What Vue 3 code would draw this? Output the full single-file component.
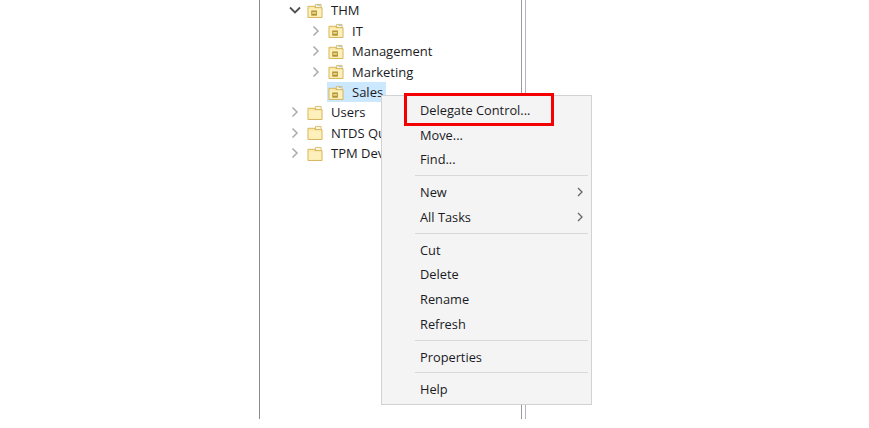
<script setup>
const tree = [
  { label: 'THM', level: 0, arrow: 'open', ou: true },
  { label: 'IT', level: 1, arrow: 'closed', ou: true },
  { label: 'Management', level: 1, arrow: 'closed', ou: true },
  { label: 'Marketing', level: 1, arrow: 'closed', ou: true },
  { label: 'Sales', level: 1, arrow: 'none', ou: true, selected: true },
  { label: 'Users', level: 0, arrow: 'closed', ou: false },
  { label: 'NTDS Quotas', level: 0, arrow: 'closed', ou: false },
  { label: 'TPM Devices', level: 0, arrow: 'closed', ou: false },
]
const groups = [
  [{ label: 'Delegate Control...' }, { label: 'Move...' }, { label: 'Find...' }],
  [{ label: 'New', sub: true }, { label: 'All Tasks', sub: true }],
  [{ label: 'Cut' }, { label: 'Delete' }, { label: 'Rename' }, { label: 'Refresh' }],
  [{ label: 'Properties' }],
  [{ label: 'Help' }],
]
</script>

<template>
  <div class="page">
    <div class="pane">
      <ul class="tree">
        <li v-for="n in tree" :key="n.label" class="row" :class="'lvl' + n.level">
          <span class="arrow">
            <svg v-if="n.arrow === 'open'" width="12" height="12" viewBox="0 0 12 12">
              <path d="M1 3.5 L6 8.5 L11 3.5" fill="none" stroke="#505050" stroke-width="1.8" />
            </svg>
            <svg v-else-if="n.arrow === 'closed'" width="12" height="12" viewBox="0 0 12 12">
              <path d="M3.5 1.5 L8 6 L3.5 10.5" fill="none" stroke="#ababab" stroke-width="1.5" />
            </svg>
          </span>
          <span class="node" :class="{ selected: n.selected }">
            <svg class="folder" width="16" height="15" viewBox="0 0 16 16">
              <path d="M8.5 1.5 H14.5 V5 H8.5 Z" fill="#fdf6d8" stroke="#d9bd72" stroke-width="1" />
              <path d="M10.5 2 H14 V3 H10.5 Z" fill="#8cc3ea" v-if="n.ou" />
              <path d="M0.5 3.5 H8 V5 H15.5 V15.5 H0.5 Z" fill="#fbe9a6" stroke="#d4b25a" stroke-width="1" />
              <path d="M1.5 6 H14.5 V14.5 H1.5 Z" fill="#fdf0bd" />
              <path d="M4 8 H10 V13.5 H4 Z" fill="#b0902f" v-if="n.ou" />
              <path d="M5 9.5 H9 V11.5 H5 Z" fill="#ecd688" v-if="n.ou" />
            </svg>
            <span class="label">{{ n.label }}</span>
          </span>
        </li>
      </ul>
      <div class="splitter"></div>
    </div>

    <div class="menu">
      <template v-for="(g, i) in groups" :key="i">
        <div v-if="i > 0" class="sep"></div>
        <div v-for="it in g" :key="it.label" class="item">
          <span>{{ it.label }}</span>
          <svg v-if="it.sub" class="sub" width="8" height="10" viewBox="0 0 8 10">
            <path d="M2 1 L6 5 L2 9" fill="none" stroke="#666" stroke-width="1.3" />
          </svg>
        </div>
      </template>
      <div class="highlight"></div>
    </div>
  </div>
</template>

<style scoped>
.page {
  position: relative;
  width: 869px;
  height: 428px;
  background: #fff;
  overflow: hidden;
  font-family: "Open Sans", "Noto Sans", sans-serif;
  font-size: 12.8px;
  color: #1a1a24;
}
.pane {
  box-sizing: border-box;
  margin-left: 259px;
  width: 267px;
  height: 419px;
  padding-top: 0.3px;
  border-left: 1px solid #8a8a8a;
  display: flex;
  justify-content: space-between;
}
.tree {
  list-style: none;
  margin: 0;
  padding: 0;
  width: 130px;
  flex: none;
  white-space: nowrap;
  font-size: 13px;
}
.row {
  display: flex;
  align-items: center;
  height: 20.4px;
}
.lvl0 { padding-left: 29px; }
.lvl1 { padding-left: 50px; }
.arrow {
  width: 12px;
  height: 12px;
  flex: none;
  margin-right: 6px;
  display: flex;
}
.node {
  display: flex;
  align-items: center;
  height: 20.4px;
  padding: 0 3px 0 1px;
  margin-left: -1px;
}
.node.selected { background: #cce8ff; }
.folder { flex: none; margin-right: 8px; }
.splitter {
  width: 5px;
  height: 419px;
  box-sizing: border-box;
  border-left: 1.5px solid #9a9aa5;
  border-right: 1.5px solid #b5b5bd;
  flex: none;
}
.menu {
  position: absolute;
  left: 381px;
  top: 95px;
  width: 211px;
  height: 310px;
  box-sizing: border-box;
  background: #f4f4f4;
  border: 1px solid #d2d2d2;
  padding-top: 1.4px;
}
.item {
  height: 24.75px;
  display: flex;
  align-items: center;
  justify-content: space-between;
  padding-left: 38px;
  padding-right: 7px;
}
.sep {
  height: 1px;
  background: #d9d9d9;
  margin: 3.5px 3px 3.5px 33px;
}
.sub { flex: none; }
.highlight {
  position: absolute;
  left: 22px;
  top: -3.5px;
  width: 150px;
  height: 33px;
  box-sizing: border-box;
  border: 3px solid #f50000;
}
</style>
